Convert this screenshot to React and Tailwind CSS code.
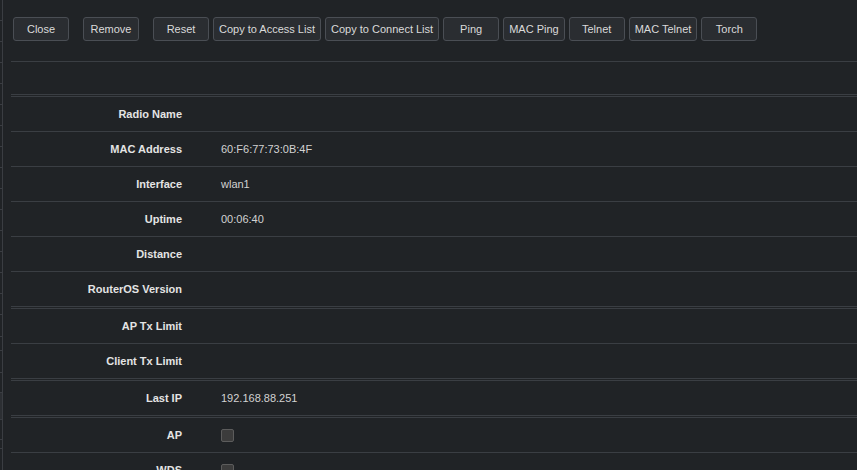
import React from "react";

const buttons = [
  { t: "Close", ml: "" },
  { t: "Remove", ml: "ml-[10px]" },
  { t: "Reset", ml: "ml-[10px]" },
  { t: "Copy to Access List", ml: "" },
  { t: "Copy to Connect List", ml: "" },
  { t: "Ping", ml: "" },
  { t: "MAC Ping", ml: "" },
  { t: "Telnet", ml: "" },
  { t: "MAC Telnet", ml: "" },
  { t: "Torch", ml: "" },
];

const sections = [
  [
    ["Radio Name", ""],
    ["MAC Address", "60:F6:77:73:0B:4F"],
    ["Interface", "wlan1"],
    ["Uptime", "00:06:40"],
    ["Distance", ""],
    ["RouterOS Version", ""],
  ],
  [
    ["AP Tx Limit", ""],
    ["Client Tx Limit", ""],
  ],
  [["Last IP", "192.168.88.251"]],
  [
    ["AP", "check"],
    ["WDS", "check"],
  ],
];

const ticks = [21, 21, 21, 21, 21, 21, 21, 21, 21, 21, 21, 21, 21, 21, 21, 22, 14, 22, 20, 27, 20, 9];

function Row({ label, value }) {
  return (
    <div className="flex h-[35px] items-center border-b border-[#3a3e43]">
      <div className="w-[171px] shrink-0 text-right text-[11px] font-bold text-[#e4e4e4]">{label}</div>
      <div className="pl-[39px] text-[11px] text-[#d2d2d2]">
        {value === "check" ? (
          <div className="h-[13px] w-[13px] rounded-[2px] border border-[#5c5c5c] bg-[#3c3c3c]" />
        ) : (
          value
        )}
      </div>
    </div>
  );
}

export default function App() {
  return (
    <div
      className="flex h-[470px] w-[857px] overflow-hidden bg-[#202326]"
      style={{ fontFamily: '"Liberation Sans", Arial, sans-serif' }}
    >
      <div className="flex w-[3px] shrink-0 flex-col border-r border-[#3a3d42]">
        {ticks.map((h, i) => (
          <div
            key={i}
            className={`shrink-0 border-b border-[#3a3d42] ${i === 19 ? "bg-[#2c2f33]" : ""}`}
            style={{ height: h }}
          />
        ))}
      </div>
      <div className="flex min-w-0 flex-1 flex-col pl-[8px]">
        <div className="flex items-start gap-1 border-b border-[#3a3e43] pb-[20px] pl-[2px] pt-[17px]">
          {buttons.map((b) => (
            <button
              key={b.t}
              className={`${b.ml} h-[24px] min-w-[56px] rounded-[3px] border border-[#4a4e54] bg-[#2a2d31] px-[5px] text-[11px] leading-none text-[#dadada]`}
            >
              {b.t}
            </button>
          ))}
        </div>
        <div className="h-[33px] shrink-0 border-b border-[#3a3e43]" />
        {sections.map((rows, i) => (
          <div key={i} className="mt-px border-t border-[#3a3e43]">
            {rows.map(([l, v]) => (
              <Row key={l} label={l} value={v} />
            ))}
          </div>
        ))}
      </div>
    </div>
  );
}
